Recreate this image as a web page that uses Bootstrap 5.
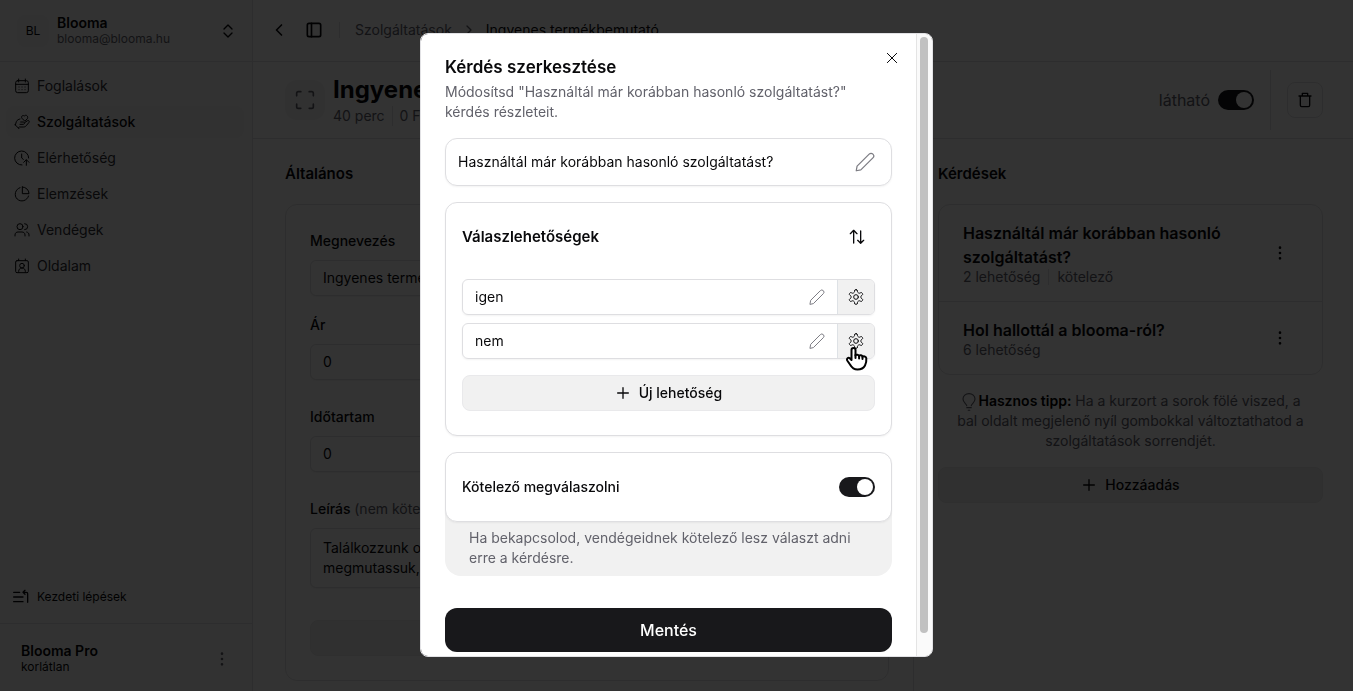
<!DOCTYPE html>
<html lang="hu">
<head>
<meta charset="utf-8">
<meta name="viewport" content="width=device-width, initial-scale=1">
<title>Blooma – Kérdés szerkesztése</title>
<link href="https://cdn.jsdelivr.net/npm/bootstrap@5.3.0/dist/css/bootstrap.min.css" rel="stylesheet">
<style>
:root{--line:#e2e2e5;--ink:#09090b;--muted:#62626b;--soft:#f1f1f1}
body{font-family:Inter,"Liberation Sans",sans-serif;font-size:14px;line-height:20px;color:var(--ink);background:#fff}
svg{fill:none;stroke:currentColor;stroke-width:2;stroke-linecap:round;stroke-linejoin:round;flex-shrink:0}
svg.thin{stroke-width:1.5}
.i16{width:16px;height:16px}.i18{width:18px;height:18px}.i20{width:20px;height:20px}
.muted{color:var(--muted)}
.form-control,.btn,.nav-link{font-size:14px;line-height:20px;color:inherit}
.form-control{border-color:var(--line);padding:7px 12px;box-shadow:0 1px 2px #0000000d}
textarea.form-control{padding-block:9px;height:60px;resize:none}
.bar{height:62px;padding-bottom:2px;border-bottom:1px solid var(--line)}
.rule{width:1px;background:var(--line)}
.f12{font-size:12px;line-height:16px}
.f15{font-size:15px;line-height:24px}
.f16{font-size:16px;line-height:24px}
.lh16{line-height:16px}

.sidebar{width:253px;background:#fafafa;border-right:1px solid var(--line)}
.org{padding:0 16px 0 17px}
.avatar{width:32px;height:32px;border-radius:8px;background:#f4f4f5}
.side-nav{padding:8px 8px 8px 6px}
.nav-link.side-link{height:32px;padding:0 8px;border-radius:8px;gap:7px;color:#2f2f35}
.nav-link.side-link.active{background:#f4f4f5;color:var(--ink)}
.side-link svg{color:var(--ink)}
.nav-link.steps{padding:0 13px;gap:8px;margin-bottom:18px}
.side-foot{height:68px;padding:2px 22px 0 21px;border-top:1px solid var(--line)}

.tools{gap:15px}
.crumbs{gap:9px}
.meta{gap:7px}
.subhead{height:77px;padding:0 30px 0 32px;border-bottom:1px solid var(--line)}
.tile{width:40px;height:40px;border-radius:12px;background:#f4f4f5}
.page-title{font-size:24px;line-height:32px}
.trash{width:36px;height:36px;border:1px solid var(--line);border-radius:8px}
.pane-l{flex:0 0 60%;padding:23px 24px 0 32px}
.pane-r{flex:0 0 40%;padding:23px 30px 0 24px;border-left:1px solid var(--line)}
.pane-title{margin-bottom:18px}
.panel{border:1px solid var(--line);border-radius:12px}
.form-panel{padding:25px 24px 24px}
.form-panel label{display:block;line-height:22px;margin-bottom:8px}
.field{margin-bottom:26px}
.field:first-child{margin-bottom:18px}
.form-end{margin-top:32px}
.soft-btn{height:36px;background:var(--soft);border:1px solid #e9e9eb;border-radius:8px}
.question{padding:16px 34px 16px 24px}
.question + .question{border-top:1px solid var(--line)}

.form-switch{min-height:0;padding:0;margin:0}
.form-switch .form-check-input{float:none;display:block;width:36px;height:20px;margin:0;border:0;background-size:20px 20px}
.form-switch .form-check-input:checked{background-color:#18181b;background-image:url("data:image/svg+xml,%3csvg xmlns='http://www.w3.org/2000/svg' viewBox='0 0 20 20'%3e%3ccircle cx='10' cy='10' r='8' fill='%23fff'/%3e%3c/svg%3e")}

.modal-backdrop.show{opacity:.8}
.modal-dialog{max-width:513px;padding-bottom:2px}
.modal-content{max-height:calc(100vh - 67px);border:1px solid var(--line);border-radius:8px;flex-direction:row;color:inherit}
.modal-main{padding:24px;overflow:hidden}
.modal-main > *{flex-shrink:0}
.modal-title{font-size:17px;line-height:18px;margin-bottom:6px}
.close-x{position:absolute;top:16px;right:32px}
.scroll-track{width:16px;padding:3px 4px 23px 3px;background:#fafafa;border-left:1px solid #e4e4e4}
.scroll-thumb{width:8px;border-radius:4px;background:#c1c1c1}
.panel-m{border:1px solid #dedee1;border-radius:12px;background:#fff;box-shadow:0 1px 2px #0000000d}
.question-box{height:48px;padding:0 16px 0 12px}
.answers-head{height:36px}
.sort{padding:10px}
.plain{border:0;background:none;outline:0;color:inherit;min-width:0}
.answer{height:36px;border:1px solid #dedee1;border-radius:6px;box-shadow:0 1px 2px #0000000d}
.gear{width:37px;border-radius:0 5px 5px 0;background:var(--soft)}
.pencil{color:#7d7d84}
.pointer{position:absolute;left:6px;top:22px;width:25px;height:25px;z-index:1}
.note{margin-top:-12px;padding:18px 24px 8px;border-radius:0 0 16px 16px;background:var(--soft)}
.save{height:44px;border-radius:12px;background:#18181b;color:#fff}
</style>
</head>
<body class="modal-open overflow-hidden">
<svg class="d-none" aria-hidden="true">
  <symbol id="plus" viewBox="0 0 24 24"><path d="M4 12h16M12 4v16"/></symbol>
  <symbol id="dots" viewBox="0 0 24 24"><g fill="currentColor"><circle cx="12" cy="4" r="1"/><circle cx="12" cy="12" r="1"/><circle cx="12" cy="20" r="1"/></g></symbol>
  <symbol id="pencil" viewBox="0 0 24 24"><path d="M1.500 22.500l1-5.500L17 2.500a3 3 0 0 1 4.500 4.500L7 21.500z"/></symbol>
  <symbol id="gear" viewBox="0 0 24 24"><path d="M12.22 1h-.44a2 2 0 0 0-2 2v.78a2 2 0 0 1-1 1.730l-.83.55a2 2 0 0 1-2 0l-.65-.38a2 2 0 0 0-2.730.730l-.22.380a2 2 0 0 0 .730 2.730l.65.400a2 2 0 0 1 1 1.720v.710a2 2 0 0 1-1 1.740l-.65.390a2 2 0 0 0-.730 2.730l.22.380a2 2 0 0 0 2.730.730l.65-.38a2 2 0 0 1 2 0l.83.55a2 2 0 0 1 1 1.730V21a2 2 0 0 0 2 2h.44a2 2 0 0 0 2-2v-.78a2 2 0 0 1 1-1.730l.83-.55a2 2 0 0 1 2 0l.65.380a2 2 0 0 0 2.730-.730l.22-.380a2 2 0 0 0-.730-2.730l-.65-.390a2 2 0 0 1-1-1.740v-.71a2 2 0 0 1 1-1.720l.65-.4a2 2 0 0 0 .730-2.730l-.22-.380a2 2 0 0 0-2.730-.730l-.65.38a2 2 0 0 1-2 0l-.83-.55a2 2 0 0 1-1-1.730V3a2 2 0 0 0-2-2z"/><circle cx="12" cy="12" r="3.500"/></symbol>
</svg>

<div class="d-flex min-vh-100">
  <aside class="sidebar d-flex flex-column flex-shrink-0">
    <div class="bar org d-flex align-items-center gap-2">
      <span class="avatar d-flex align-items-center justify-content-center f12">BL</span>
      <div class="flex-grow-1"><div class="fw-semibold lh16">Blooma</div><div class="f12 muted">blooma@blooma.hu</div></div>
      <svg class="i16" viewBox="0 0 24 24"><path d="m6 9 6-6 6 6M6 15l6 6 6-6"/></svg>
    </div>
    <nav class="nav side-nav flex-column gap-1 flex-nowrap" aria-label="Fő menü">
      <a class="nav-link side-link d-flex align-items-center" href="#"><svg class="i16 thin" viewBox="0 0 24 24"><rect x="2.500" y="4" width="19" height="18" rx="3"/><path d="M2.500 9.500h19M7 1.500V6M17 1.500V6M7.500 13.500h.1M12 13.500h.1M16.500 13.500h.1M7.500 17.500h.1M12 17.500h.1M16.500 17.500h.1"/></svg>Foglalások</a>
      <a class="nav-link side-link active fw-medium d-flex align-items-center" href="#"><svg class="i16 thin" viewBox="0 0 24 24"><path d="M1.500 16l6 6M2 16.500l1.500-5C5 8.500 7 8 9 7.500M6.500 21l1.500-1.500h6c2 0 3-.5 4.500-2l4-5c1.300-2-.8-3.500-2.500-2.300L16 13M9 15.500h4.500c3 0 3-3.500 0-3.500H10M16 10.500l-4-4c-2-2.500.8-5.500 3.500-3.500 2-2.500 6-.5 5 3z"/></svg>Szolgáltatások</a>
      <a class="nav-link side-link d-flex align-items-center" href="#"><svg class="i16 thin" viewBox="0 0 24 24"><path d="M22 12A10.500 10.500 0 1 0 12 22.500M11.500 6v6l2.500 2M18.500 23v-8M14.500 18.500l4-4 4 4"/></svg>Elérhetőség</a>
      <a class="nav-link side-link d-flex align-items-center" href="#"><svg class="i16 thin" viewBox="0 0 24 24"><path d="M9 2.500A10.200 10.200 0 1 0 21.800 15M12.500 1.500v10h10a10 10 0 0 0-10-10z"/></svg>Elemzések</a>
      <a class="nav-link side-link d-flex align-items-center" href="#"><svg class="i16 thin" viewBox="0 0 24 24"><circle cx="9" cy="7" r="4.500"/><path d="M1.500 21v-1.500c0-3 2-4.500 4.500-4.500h6c2.500 0 4.500 1.500 4.500 4.500V21M16 2.500a4.500 4.500 0 0 1 0 9M19 15c2.500.6 3.500 2 3.500 4.500V21"/></svg>Vendégek</a>
      <a class="nav-link side-link d-flex align-items-center" href="#"><svg class="i16 thin" viewBox="0 0 24 24"><rect x="2.500" y="4" width="19" height="18" rx="2"/><circle cx="12" cy="11.500" r="3.500"/><path d="M7 21v-1c0-3 2-5 5-5s5 2 5 5v1M7 1.500V4M17 1.500V4"/></svg>Oldalam</a>
    </nav>
    <a class="nav-link steps f12 d-flex align-items-center mt-auto" href="#"><svg class="i16" viewBox="0 0 24 24"><path d="M1 5h9M1 12h14M1 19h14M15 5h5a2 2 0 0 1 2 2v13M18 2l-3 3 3 3"/></svg>Kezdeti lépések</a>
    <div class="side-foot d-flex align-items-center">
      <div class="flex-grow-1"><div class="fw-semibold lh16">Blooma Pro</div><div class="f12">korlátlan</div></div>
      <svg class="i16 muted" viewBox="0 0 24 24"><use href="#dots"/></svg>
    </div>
  </aside>

  <main class="flex-grow-1 d-flex flex-column">
    <header class="bar tools d-flex align-items-center ps-3">
      <div class="tools d-flex align-items-center">
        <button class="btn p-0 border-0 d-flex" aria-label="Vissza"><svg class="i20" viewBox="0 0 24 24"><path d="m15 18-6-6 6-6"/></svg></button>
        <button class="btn p-0 border-0 d-flex" aria-label="Oldalsáv"><svg class="i20" viewBox="0 0 24 24"><rect x="4" y="4" width="16" height="16" rx="2"/><path d="M9 4v16"/></svg></button>
        <span class="rule py-2"></span>
      </div>
      <nav class="crumbs d-flex align-items-center" aria-label="Morzsamenü">
        <a class="text-decoration-none muted" href="#">Szolgáltatások</a>
        <svg class="i16 muted" viewBox="0 0 24 24"><path d="m9 18 6-6-6-6"/></svg>
        <span>Ingyenes termékbemutató</span>
      </nav>
    </header>
    <section class="subhead d-flex align-items-center gap-2">
      <span class="tile d-flex align-items-center justify-content-center"><svg class="i20 muted" viewBox="0 0 24 24"><path d="M2 7V4a2 2 0 0 1 2-2h3M17 2h3a2 2 0 0 1 2 2v3M22 17v3a2 2 0 0 1-2 2h-3M7 22H4a2 2 0 0 1-2-2v-3"/></svg></span>
      <div class="flex-grow-1">
        <h1 class="page-title fw-bold m-0">Ingyenes termékbemutató</h1>
        <div class="meta d-flex muted"><span>40 perc</span><span class="rule"></span><span>0 Ft</span></div>
      </div>
      <label class="f16 muted" for="visible">látható</label>
      <div class="form-check form-switch"><input class="form-check-input" type="checkbox" role="switch" id="visible" checked></div>
      <span class="rule align-self-stretch my-2 ms-2"></span>
      <button class="btn trash p-0 d-flex align-items-center justify-content-center ms-2" aria-label="Törlés"><svg class="i16" viewBox="0 0 24 24"><path d="M3 6h18M8 6V2h8v4M5 6v14a2 2 0 0 0 2 2h10a2 2 0 0 0 2-2V6"/></svg></button>
    </section>

    <div class="d-flex flex-grow-1">
      <section class="pane-l">
        <h2 class="pane-title f15 fw-semibold">Általános</h2>
        <form class="panel form-panel">
          <div class="field"><label class="fw-medium" for="name">Megnevezés</label><input class="form-control" id="name" value="Ingyenes termékbemutató"></div>
          <div class="field"><label class="fw-medium" for="price">Ár</label><input class="form-control" id="price" value="0"></div>
          <div class="field"><label class="fw-medium" for="time">Időtartam</label><input class="form-control" id="time" value="0"></div>
          <div><label class="fw-medium" for="desc">Leírás <span class="muted fw-normal">(nem kötelező)</span></label><textarea class="form-control" id="desc">Találkozzunk online, hogy
megmutassuk, hogyan működik a blooma.</textarea></div>
          <button class="btn soft-btn form-end w-100" type="button" aria-label="Változtatások mentése"></button>
        </form>
      </section>
      <section class="pane-r">
        <h2 class="pane-title f15 fw-semibold">Kérdések</h2>
        <div class="panel">
          <div class="question d-flex align-items-center">
            <div class="flex-grow-1"><h3 class="f16 fw-semibold m-0">Használtál már korábban hasonló szolgáltatást?</h3>
            <div class="d-flex gap-2 muted lh16"><span>2 lehetőség</span><span class="rule"></span><span>kötelező</span></div></div>
            <svg class="i16" viewBox="0 0 24 24"><use href="#dots"/></svg>
          </div>
          <div class="question d-flex align-items-center">
            <div class="flex-grow-1"><h3 class="f16 fw-semibold m-0">Hol hallottál a blooma-ról?</h3><div class="muted lh16">6 lehetőség</div></div>
            <svg class="i16" viewBox="0 0 24 24"><use href="#dots"/></svg>
          </div>
        </div>
        <p class="muted text-center px-3 my-3"><svg class="i18 thin align-middle" viewBox="0 0 24 24"><path d="M9 17c0-2.500-5-4-5-9a8 7.200 0 0 1 16 0c0 5-5 6.500-5 9M9 19.500h6M11 23h2"/></svg><b class="fw-semibold text-black">Hasznos tipp:</b> Ha a kurzort a sorok fölé viszed, a bal oldalt megjelenő nyíl gombokkal változtathatod a szolgáltatások sorrendjét.</p>
        <button class="btn soft-btn w-100 fw-medium d-flex align-items-center justify-content-center gap-2"><svg class="i16" viewBox="0 0 24 24"><use href="#plus"/></svg>Hozzáadás</button>
      </section>
    </div>
  </main>
</div>

<div class="modal-backdrop show"></div>
<div class="modal show d-block" role="dialog" aria-modal="true" aria-labelledby="dlg-title">
  <div class="modal-dialog modal-dialog-centered my-0 min-vh-100">
    <div class="modal-content overflow-hidden">
      <form class="modal-main flex-grow-1 d-flex flex-column gap-3">
        <div>
          <h2 class="modal-title fw-semibold" id="dlg-title">Kérdés szerkesztése</h2>
          <p class="muted m-0">Módosítsd "Használtál már korábban hasonló szolgáltatást?" kérdés részleteit.</p>
        </div>
        <div class="panel-m d-flex align-items-center question-box">
          <input class="plain flex-grow-1 p-0" aria-label="Kérdés" value="Használtál már korábban hasonló szolgáltatást?">
          <svg class="i20 thin pencil" viewBox="0 0 24 24"><use href="#pencil"/></svg>
        </div>
        <div class="panel-m px-3 pt-3 pb-4">
          <div class="d-flex align-items-center justify-content-between mb-4 answers-head">
            <h3 class="f15 fw-semibold m-0">Válaszlehetőségek</h3>
            <button class="btn sort border-0 d-flex" type="button" aria-label="Sorrend"><svg class="i16" viewBox="0 0 24 24"><path d="m2 7 5-5 5 5M7 3v18M13 17l4.500 4.500L22 17M17.500 3v18"/></svg></button>
          </div>
          <div class="d-flex flex-column gap-2 mb-3">
            <div class="answer d-flex">
              <input class="plain flex-grow-1 px-2 ms-1" aria-label="1. válasz" value="igen">
              <svg class="i16 thin pencil align-self-center me-2 ms-2" viewBox="0 0 24 24"><use href="#pencil"/></svg><span class="pe-1"></span>
              <button class="btn gear p-0 border-0 border-start d-flex align-items-center justify-content-center muted" type="button" aria-label="Beállítások"><svg class="i16 thin" viewBox="0 0 24 24"><use href="#gear"/></svg></button>
            </div>
            <div class="answer d-flex">
              <input class="plain flex-grow-1 px-2 ms-1" aria-label="2. válasz" value="nem">
              <svg class="i16 thin pencil align-self-center me-2 ms-2" viewBox="0 0 24 24"><use href="#pencil"/></svg><span class="pe-1"></span>
              <button class="btn gear p-0 border-0 border-start d-flex align-items-center justify-content-center position-relative muted" type="button" aria-label="Beállítások"><svg class="i16 thin" viewBox="0 0 24 24"><use href="#gear"/></svg>
                <svg class="pointer" viewBox="0 0 25 25"><path fill="#fff" stroke="#000" d="M7.500 14V4a2 2 0 0 1 4 0v5.500c.5-1.300 3.300-1.100 3.600.5.700-1.200 3.200-.8 3.400.8 1-.9 3.500-.5 3.800 1.400.3 3-.1 5-1.300 7.300-1.500 2.900-4 4-7.500 4-3.700 0-5.500-1.500-7.500-5l-2.800-4c-.9-2 1-3.500 2.600-2.300z"/><path stroke="#000" d="M11.500 9v3M15.100 10v2.500M18.500 11v2"/></svg>
              </button>
            </div>
          </div>
          <button class="btn soft-btn w-100 fw-medium d-flex align-items-center justify-content-center gap-2" type="button"><svg class="i16" viewBox="0 0 24 24"><use href="#plus"/></svg>Új lehetőség</button>
        </div>
        <div>
          <div class="panel-m position-relative d-flex align-items-center justify-content-between px-3 py-4">
            <label class="fw-medium" for="required">Kötelező megválaszolni</label>
            <div class="form-check form-switch"><input class="form-check-input" type="checkbox" role="switch" id="required" checked></div>
          </div>
          <p class="note muted mb-3">Ha bekapcsolod, vendégeidnek kötelező lesz választ adni erre a kérdésre.</p>
        </div>
        <button class="btn save f16 fw-medium w-100" type="button">Mentés</button>
      </form>
      <div class="scroll-track d-flex flex-shrink-0" aria-hidden="true"><span class="scroll-thumb"></span></div>
      <button class="btn close-x p-0 border-0 d-flex" type="button" aria-label="Bezárás"><svg class="i16 thin" viewBox="0 0 24 24"><path d="M5 5l14 14M19 5 5 19"/></svg></button>
    </div>
  </div>
</div>
<script src="https://cdn.jsdelivr.net/npm/bootstrap@5.3.0/dist/js/bootstrap.bundle.min.js"></script>
</body>
</html>
